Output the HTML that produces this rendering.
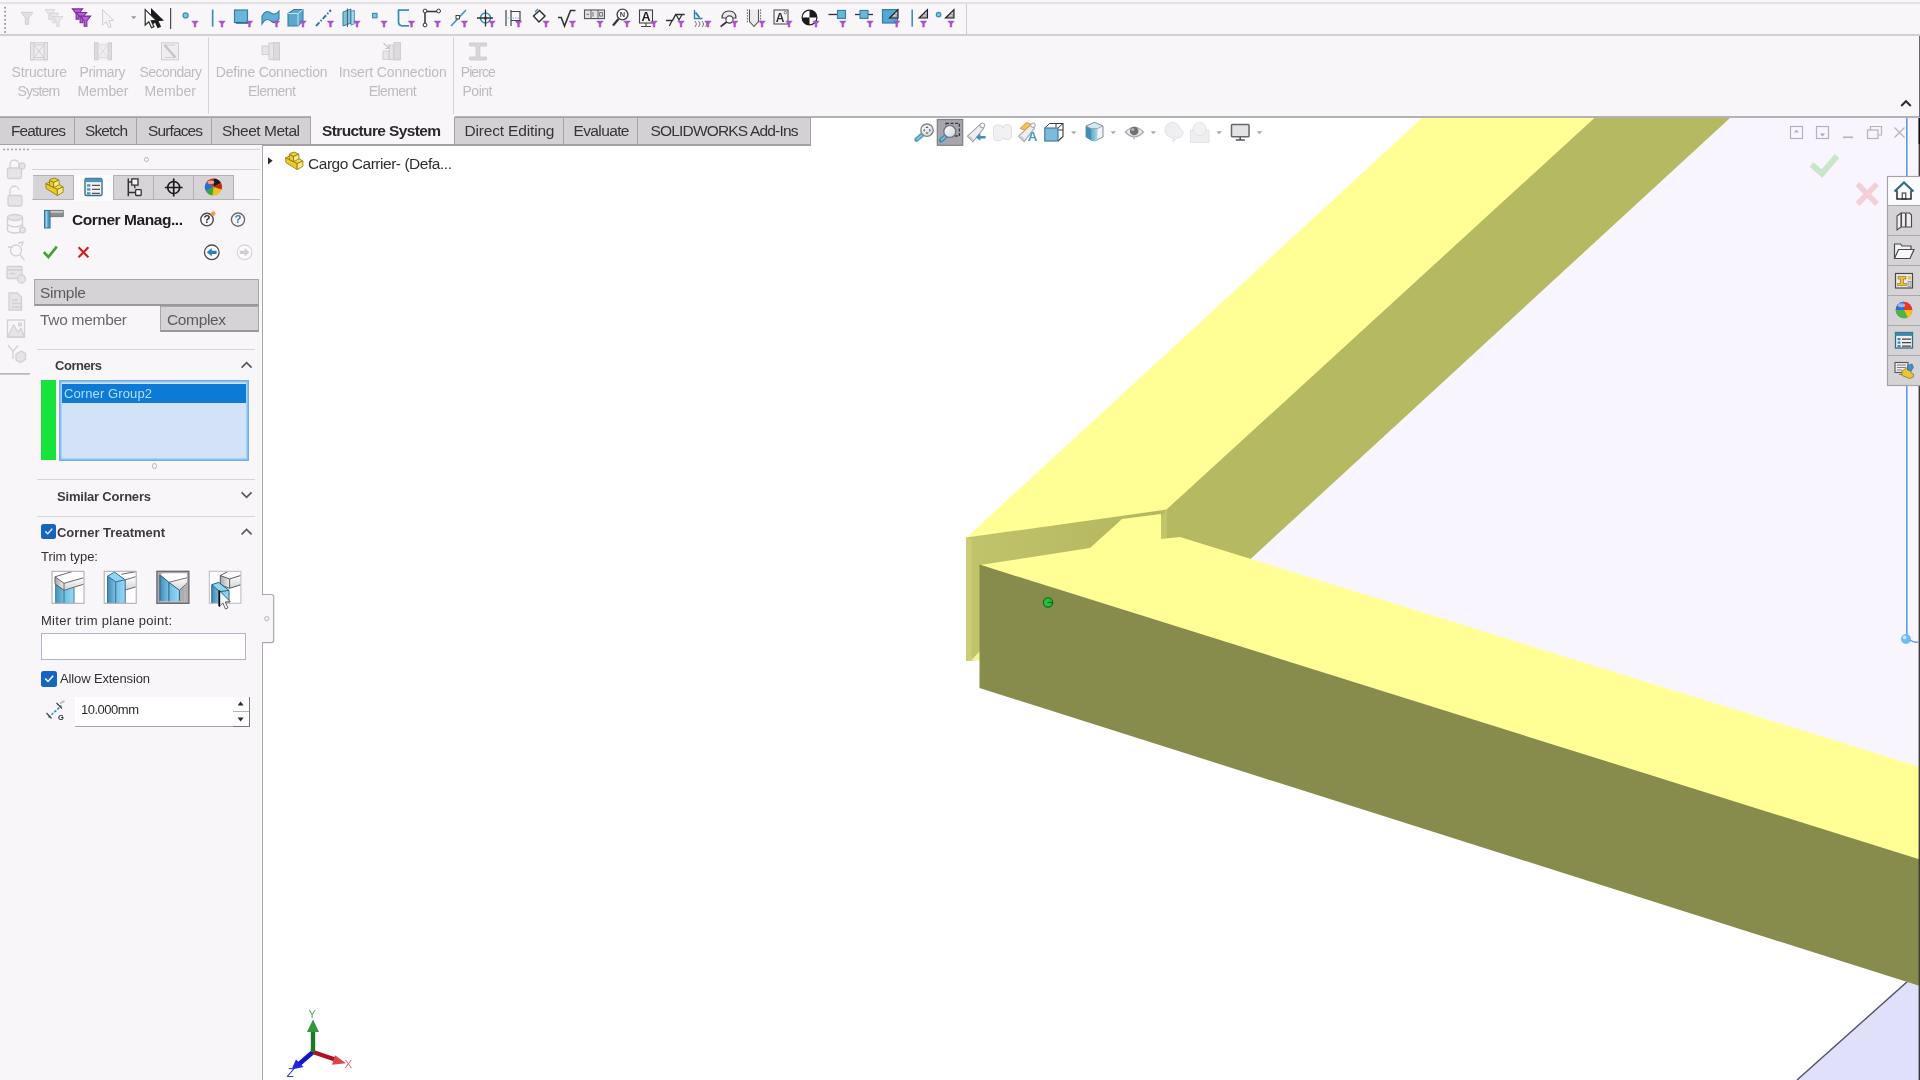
<!DOCTYPE html>
<html lang="en">
<head>
<meta charset="utf-8">
<title>Cargo Carrier - Corner Management</title>
<style>
html,body{margin:0;padding:0;width:1920px;height:1080px;overflow:hidden;background:#ffffff;}
body{font-family:"Liberation Sans",sans-serif;color:#2b2b2b;}
#root{position:relative;width:1920px;height:1080px;overflow:hidden;background:#ffffff;will-change:transform;}
.a{position:absolute;}
.t{position:absolute;white-space:nowrap;line-height:1;}
svg{position:absolute;left:0;top:0;overflow:visible;}
.tab{position:absolute;top:117px;height:28px;box-sizing:border-box;background:#d3d1d4;border:1px solid #a5a3a6;font-size:15.5px;color:#353535;white-space:nowrap;}
.tab span{position:absolute;top:4px;line-height:17px;white-space:nowrap;}
.rib{position:absolute;font-size:14px;color:#bdbbbf;white-space:nowrap;line-height:16px;}
.pmtab{position:absolute;top:175px;height:25px;box-sizing:border-box;background:#d6d4d7;border:1px solid #b3b1b4;}
.sec{position:absolute;left:37px;width:218px;height:1px;background:#d7d5d8;}
.hd{position:absolute;font-size:13px;font-weight:bold;color:#3c3c3c;white-space:nowrap;line-height:16px;}
.lb{position:absolute;font-size:13px;color:#303036;white-space:nowrap;line-height:16px;}
</style>
</head>
<body>
<div id="root">
<!-- ================= GRAPHICS VIEWPORT ================= -->
<svg id="view" width="1920" height="1080" viewBox="0 0 1920 1080">
  <defs><linearGradient id="cutg" gradientUnits="userSpaceOnUse" x1="966" y1="0" x2="1167" y2="0"><stop offset="0" stop-color="#c1c46b"/><stop offset="0.500" stop-color="#b9bc64"/><stop offset="1" stop-color="#b3b75f"/></linearGradient></defs>
  <!-- reference plane (lavender) -->
  <polygon points="1240,560 1730,118 1920,118 1920,790" fill="#f9f5fe"/>
  <polygon points="1797,1080 1920,970 1920,1080" fill="#e0e0fb"/>
  <line x1="1797" y1="1080" x2="1908" y2="981" stroke="#50506a" stroke-width="1.400"/>
  <!-- upper member : top face -->
  <polygon points="966,538 1422,118 1595,118 1167,510" fill="#ffff96"/>
  <!-- upper member : inner side face -->
  <polygon points="1166.500,509.600 1594.400,118 1730,118 1250,559.500 1180,539.500 1166.500,540" fill="#b5b961"/>
  <polygon points="1161,513 1167,509.800 1167,540 1161,541" fill="#c1c46a"/>
  <!-- upper member : trimmed end face -->
  <polygon points="966,537.600 1167,509.600 1161,516 1122,522 1090,551 980,568 980,660 966,661" fill="url(#cutg)"/>
  <polygon points="966,538 971.5,539 971.5,660 966,661" fill="#cbce74"/>
  <polygon points="971.5,660 980,651 980,660" fill="#f3f39a"/>
  <!-- lower member : top face -->
  <polygon points="980,565 1090,548 1122,519 1161,514 1161,539 1180,537 1920,767 1920,860" fill="#ffff96"/>
  <!-- lower member : front face -->
  <polygon points="979.500,564.600 1920,859.600 1920,986 979.500,688" fill="#878b4b"/>
  <!-- pierce point -->
  <circle cx="1048" cy="602.5" r="4.6" fill="#1fc639" stroke="#0f6a1d" stroke-width="1.2"/>
  <path d="M1047.5 602.5h5" stroke="#0f6a1d" stroke-width="1.4"/>
  <!-- right edge rollback bar -->
  <rect x="1906" y="118" width="1.6" height="521" fill="#5b9bea"/>
  <circle cx="1906" cy="639" r="5" fill="#6fbdf2"/>
  <circle cx="1904.6" cy="637.4" r="1.8" fill="#c7e7fb"/>
  <path d="M1910 640 q4 3 8 2" fill="none" stroke="#5b9bea" stroke-width="1.4"/>
  <rect x="1918.600" y="118" width="1.400" height="962" fill="#3d3d3d"/>
  <rect x="1918.600" y="117" width="1.400" height="27" fill="#111"/>
  <!-- triad -->
  <g id="triad">
    <path d="M313 1052 L298 1065" stroke="#1414c8" stroke-width="4.600" stroke-linecap="round"/>
    <path d="M291.500 1069.500 l4.500 -10 l7.500 7.500z" fill="#2424e4"/>
    <path d="M313 1052 L338 1060.5" stroke="#b01020" stroke-width="4.2"/>
    <path d="M346 1063.2 l-11 -8 l-3 9.5z" fill="#e0454f"/>
    <path d="M313 1052 L313 1030" stroke="#1f7a26" stroke-width="4.4"/>
    <path d="M313 1019.5 l6 12.5 h-12z" fill="#2f9838"/>
    <text x="308.500" y="1017.500" font-size="11" fill="#4caf50" font-family="Liberation Sans, sans-serif">Y</text>
    <text x="344.5" y="1067.5" font-size="11.5" fill="#ee6b77" font-family="Liberation Sans, sans-serif">X</text>
    <text x="287" y="1076.5" font-size="12" font-style="italic" fill="#3a3af0" font-family="Liberation Sans, sans-serif">Z</text>
  </g>
</svg>
<!-- ================= TOP CHROME ================= -->
<div class="a" style="left:0;top:0;width:1920px;height:117px;background:#f8f6f9;"></div>
<div class="a" style="left:0;top:2px;width:1920px;height:2px;background:#e4e2e5;"></div>
<div class="a" style="left:0;top:34px;width:1920px;height:2px;background:#d2d0d3;"></div>
<div class="a" style="left:965.5px;top:4px;width:1.5px;height:31px;background:#cfcdd0;"></div>
<div class="a" style="left:0;top:116px;width:1920px;height:2px;background:#b4b2b5;"></div>
<div class="a" style="left:1918.5px;top:36px;width:1.5px;height:81px;background:#6a686b;"></div>
<svg id="filterbar" width="1920" height="36" viewBox="0 0 1920 36">
<defs>
<g id="pf"><path d="M-3.3 -3h6.600l-2.400 2.800v3.300h-1.800v-3.300z" fill="#ad50cf" stroke="#9a44bd" stroke-width="0.4"/></g>
<g id="gf"><path d="M-6 -6h12l-4.4 5.6v6.4h-3.2v-6.4z" /></g>
<g id="rul"><path d="M-4.500 4 l8.500 -8.500 v8.500z" fill="#a4a4a8" stroke="#222" stroke-width="1.100"/><path d="M-0.500 1.800h2.500M1.500 -0.800h1.500" stroke="#eee" stroke-width="0.800"/></g>
</defs>
<rect x="4.2" y="6.8" width="1.8" height="1.8" fill="#9b999c"/>
<rect x="4.2" y="10.8" width="1.8" height="1.8" fill="#9b999c"/>
<rect x="4.2" y="14.9" width="1.8" height="1.8" fill="#9b999c"/>
<rect x="4.2" y="18.9" width="1.8" height="1.8" fill="#9b999c"/>
<rect x="4.2" y="23.0" width="1.8" height="1.8" fill="#9b999c"/>
<rect x="4.2" y="27.1" width="1.8" height="1.8" fill="#9b999c"/>
<rect x="4.2" y="31.1" width="1.8" height="1.8" fill="#9b999c"/>
<use href="#gf" x="27" y="18.3" fill="#e1dfe2" stroke="#cdcbce" stroke-width="0.9"/>
<use href="#gf" transform="translate(50.0 14.6) scale(0.82)" fill="#ebe9ec" stroke="#d3d1d4" stroke-width="1"/>
<use href="#gf" transform="translate(54.0 18.0) scale(0.82)" fill="#ebe9ec" stroke="#d3d1d4" stroke-width="1"/>
<use href="#gf" transform="translate(58.0 21.4) scale(0.82)" fill="#ebe9ec" stroke="#d3d1d4" stroke-width="1"/>
<use href="#gf" transform="translate(77.5 14.0) scale(0.85)" fill="#b660d8" stroke="#7a2a9c" stroke-width="1.3"/>
<use href="#gf" transform="translate(81.5 17.6) scale(0.85)" fill="#b660d8" stroke="#7a2a9c" stroke-width="1.3"/>
<use href="#gf" transform="translate(85.5 21.2) scale(0.85)" fill="#b660d8" stroke="#7a2a9c" stroke-width="1.3"/>
<path d="M102.6 9.6 l0 15.5 l3.6 -3.4 l2.7 6 l2.4 -1.1 l-2.7 -5.9 l5 -0.3z" fill="#f5f3f6" stroke="#d0ced1" stroke-width="1"/>
<path d="M131 16.2h5.4l-2.7 3z" fill="#98969a"/>
<path d="M151.6 9.4 l0 15.5 l3.6 -3.4 l2.7 6 l2.4 -1.1 l-2.7 -5.9 l5 -0.3z" fill="#1a1a1a" stroke="#1a1a1a" stroke-width="1.2"/>
<path d="M145.2 9.6 l0 15.5 l3.6 -3.4 l2.7 6 l2.4 -1.1 l-2.7 -5.9 l5 -0.3z" fill="#fbfbfb" stroke="#2a2a2a" stroke-width="1.2"/>
<rect x="170" y="8" width="1.2" height="21" fill="#4d4b4e"/>
<circle cx="185.6" cy="15.4" r="2.5" fill="#7fc6e3" stroke="#3d8fb5" stroke-width="1.3"/>
<use href="#pf" x="195.0" y="24.0"/>
<rect x="211.8" y="9.6" width="1.7" height="17" fill="#3d8fb5"/>
<use href="#pf" x="222.0" y="24.0"/>
<rect x="234.5" y="10" width="13" height="12.5" fill="#6bb5d6" stroke="#2f7fa6" stroke-width="1.2"/><path d="M235 22.5h13.4v1.3h-12z" fill="#2a5f7c"/>
<use href="#pf" x="249.5" y="24.0"/>
<path d="M262 16 q4 -7 9 -3 q4 3 8 -2 v8 q-4 6 -8 2 q-5 -4 -9 3z" fill="#5fb0d4" stroke="#2f7fa6" stroke-width="1.1"/>
<use href="#pf" x="276.5" y="24.0"/>
<path d="M288 13.5 l6 -4 h9 v11 l-5 5.5 h-10z" fill="#5aa9cc" stroke="#2f7fa6" stroke-width="1.1"/><path d="M288 13.5h10l5 -4M298 13.5v12" fill="none" stroke="#bfe3f2" stroke-width="1"/>
<use href="#pf" x="303.0" y="24.0"/>
<path d="M316 26 L331 10" stroke="#34799b" stroke-width="2" stroke-dasharray="5 1.6 1.6 1.6"/>
<use href="#pf" x="330.5" y="24.0"/>
<path d="M343 12 l8 -3 v14 l-8 3z" fill="#7fc2de" stroke="#2f7fa6" stroke-width="1"/><path d="M347.4 8.5v18.5" stroke="#555" stroke-width="1"/><path d="M351 11.5l3.4 -1.2v13.5l-3.4 1.4z" fill="#a9d9ec" stroke="#2f7fa6" stroke-width="0.8"/>
<use href="#pf" x="357.0" y="24.0"/>
<rect x="372.6" y="13.4" width="4.4" height="4.4" fill="#7fc6e3" stroke="#3d8fb5" stroke-width="1.2"/>
<use href="#pf" x="384.0" y="24.0"/>
<path d="M409 10.2h-10.5v11.6q0 4 4 4h6.5" fill="none" stroke="#3d8fb5" stroke-width="1.8"/><path d="M401 12.5h8v9.5h-5" fill="none" stroke="#c5dff0" stroke-width="0.7" stroke-dasharray="1 1"/>
<use href="#pf" x="411.5" y="24.0"/>
<path d="M425 11.5v13M425 11.5h13" fill="none" stroke="#333" stroke-width="1.5"/><circle cx="425" cy="11" r="1.9" fill="#fff" stroke="#333" stroke-width="1"/><circle cx="438.6" cy="11" r="1.9" fill="#fff" stroke="#333" stroke-width="1"/><circle cx="425" cy="25" r="1.9" fill="#fff" stroke="#333" stroke-width="1"/>
<use href="#pf" x="437.5" y="24.0"/>
<path d="M451 26 L466 10" stroke="#3d8fb5" stroke-width="1.5"/><rect x="456" y="15.5" width="3.4" height="3.4" fill="#fff" stroke="#333" stroke-width="0.9"/>
<use href="#pf" x="464.5" y="24.0"/>
<circle cx="485.5" cy="18" r="5" fill="none" stroke="#3d8fb5" stroke-width="1.6"/><path d="M485.5 9.5v17M477 18h16" stroke="#333" stroke-width="1.3"/><circle cx="485.5" cy="18" r="1.6" fill="#333"/>
<use href="#pf" x="492.0" y="24.0"/>
<path d="M506 10v16M511 10v16" stroke="#444" stroke-width="1.2"/><path d="M511 11.5h9v9h-9" fill="none" stroke="#444" stroke-width="1.2"/><path d="M505 18h15" stroke="#6ab0e0" stroke-width="0.9" stroke-dasharray="1.5 1"/>
<use href="#pf" x="518.5" y="24.0"/>
<path d="M533.5 16 l6 -5.5 l5.5 5.5 l-6 6z" fill="#fff" stroke="#333" stroke-width="1.5"/><path d="M535 12l3-3" stroke="#3d8fb5" stroke-width="1.3"/>
<use href="#pf" x="546.0" y="24.0"/>
<path d="M558 17.5 h3.2 l3.3 8.5 l6 -15.5 h5" fill="none" stroke="#333" stroke-width="1.6"/>
<use href="#pf" x="572.5" y="24.0"/>
<rect x="584.5" y="10" width="20" height="8.6" fill="#e4e2e5" stroke="#555" stroke-width="1.1"/><path d="M591 10v8.6M598 10v8.6" stroke="#555" stroke-width="0.9"/><path d="M586.4 14.3h2.8M593 12v4.6M599.6 12.5h3v3.6h-3z" stroke="#555" stroke-width="0.8" fill="none"/>
<use href="#pf" x="600.0" y="24.0"/>
<circle cx="622.5" cy="14.5" r="5.4" fill="#fff" stroke="#444" stroke-width="1.4"/><path d="M618.5 19l-5.5 6.5" stroke="#333" stroke-width="2.2"/><text x="622.500" y="17.200" font-size="7.500" font-weight="bold" text-anchor="middle" fill="#444" font-family="Liberation Sans, sans-serif">N</text>
<use href="#pf" x="627.0" y="24.0"/>
<rect x="639.5" y="10" width="13" height="13" fill="#f4f2f5" stroke="#444" stroke-width="1.1"/><text x="646" y="21.400" font-size="12.500" font-weight="bold" text-anchor="middle" fill="#222" font-family="Liberation Sans, sans-serif">A</text><path d="M641 26.5h10M646 23v3.5" stroke="#444" stroke-width="1.1"/>
<use href="#pf" x="654.0" y="24.0"/>
<path d="M666 20.5h6.5l3.2 -6h9" fill="none" stroke="#333" stroke-width="1.5"/><path d="M672 20.5l-2.6 5.5M676 14.5l3 5.5l3 -5.5" fill="none" stroke="#333" stroke-width="1.3"/>
<use href="#pf" x="681.0" y="24.0"/>
<path d="M694.5 10v8.5h8" fill="none" stroke="#2f7fa6" stroke-width="1.4"/><path d="M695.5 12.5l4 5" stroke="#2f7fa6" stroke-width="2"/><path d="M695 21q3 3 0 6M698.6 21q3 3 0 6M702.2 21q3 3 0 6M705.6 21q3 3 0 6" fill="none" stroke="#777" stroke-width="1"/>
<use href="#pf" x="708.0" y="24.0"/>
<path d="M722 18q0 -7 7 -7t7 7z" fill="#e9e7ea" stroke="#444" stroke-width="1.2"/><circle cx="729.5" cy="19.5" r="3.6" fill="#fff" stroke="#444" stroke-width="1.1"/><path d="M726.6 22l-6 4.6" stroke="#333" stroke-width="1.8"/>
<use href="#pf" x="734.7" y="24.0"/>
<path d="M749.5 9.5v12l4.5 5l4.5 -5v-12" fill="#ecebed" stroke="#555" stroke-width="1.1"/><path d="M747.4 9.5v13M760.6 9.5v13" stroke="#555" stroke-width="0.9" stroke-dasharray="1.6 1.2"/>
<use href="#pf" x="762.0" y="24.0"/>
<rect x="774" y="10" width="14" height="14" fill="#f4f2f5" stroke="#555" stroke-width="1.1"/><text x="780.200" y="22.200" font-size="12" font-weight="bold" text-anchor="middle" fill="#333" font-family="Liberation Sans, sans-serif">A</text><circle cx="785.4" cy="12.6" r="1.2" fill="none" stroke="#555" stroke-width="0.7"/>
<use href="#pf" x="789.0" y="24.0"/>
<circle cx="809.5" cy="17.5" r="7.4" fill="#fff" stroke="#222" stroke-width="1.2"/><path d="M809.5 17.5v-7.4a7.4 7.4 0 0 1 7.4 7.4zM809.5 17.5v7.4a7.4 7.4 0 0 1 -7.4 -7.4z" fill="#1a1a1a"/>
<use href="#pf" x="816.0" y="24.0"/>
<path d="M828.5 14.5h9" stroke="#333" stroke-width="1.3"/><rect x="837.5" y="10.4" width="8" height="8" fill="#6bb5d6" stroke="#2f7fa6" stroke-width="1.1"/>
<use href="#pf" x="842.8" y="24.0"/>
<path d="M855 14.5h18" stroke="#333" stroke-width="1.3"/><rect x="860" y="10.4" width="8" height="8" fill="#6bb5d6" stroke="#2f7fa6" stroke-width="1.1"/>
<use href="#pf" x="870.0" y="24.0"/>
<rect x="882.5" y="9.6" width="15" height="13.4" fill="#55a8d4" stroke="#2f7fa6" stroke-width="1.2"/><use href="#rul" x="894" y="14"/>
<use href="#pf" x="896.7" y="24.0"/>
<rect x="911.4" y="9.6" width="1.6" height="17" fill="#3d8fb5"/><use href="#rul" x="923.5" y="14"/>
<use href="#pf" x="923.5" y="24.0"/>
<circle cx="938.6" cy="14.6" r="2.3" fill="#7fc6e3" stroke="#3d8fb5" stroke-width="1.2"/><use href="#rul" x="950" y="14"/>
<use href="#pf" x="951.0" y="24.0"/>
</svg>
<!-- ================= COMMAND MANAGER RIBBON ================= -->
<div class="a" style="left:208px;top:37px;width:1.4px;height:77px;background:#d5d3d6;"></div>
<div class="a" style="left:453px;top:37px;width:1.4px;height:77px;background:#d5d3d6;"></div>
<span class="rib" id="r1" style="letter-spacing:-0.164px;left:11.5px;top:64px;">Structure</span>
<span class="rib" id="r2" style="letter-spacing:-0.797px;left:17.5px;top:83px;">System</span>
<span class="rib" id="r3" style="letter-spacing:-0.372px;left:79.5px;top:64px;">Primary</span>
<span class="rib" id="r4" style="letter-spacing:-0.072px;left:77.5px;top:83px;">Member</span>
<span class="rib" id="r5" style="letter-spacing:-0.555px;left:139.5px;top:64px;">Secondary</span>
<span class="rib" id="r6" style="letter-spacing:0.028px;left:144.5px;top:83px;">Member</span>
<span class="rib" id="r7" style="letter-spacing:-0.218px;left:215.8px;top:64px;">Define Connection</span>
<span class="rib" id="r8" style="letter-spacing:-0.593px;left:248px;top:83px;">Element</span>
<span class="rib" id="r9" style="letter-spacing:-0.108px;left:338.7px;top:64px;">Insert Connection</span>
<span class="rib" id="r10" style="letter-spacing:-0.560px;left:368.7px;top:83px;">Element</span>
<span class="rib" id="r11" style="letter-spacing:-0.938px;left:460.8px;top:64px;">Pierce</span>
<span class="rib" id="r12" style="letter-spacing:-0.480px;left:462.5px;top:83px;">Point</span>
<svg id="ribicons" width="520" height="118" viewBox="0 0 520 118">
  <g fill="#e7e5e8" stroke="#cfcdd0" stroke-width="1">
    <!-- structure system -->
    <rect x="30.5" y="42.8" width="17" height="17" fill="#efedf0"/>
    <rect x="30.5" y="42.8" width="3.4" height="17"/><rect x="44.1" y="42.8" width="3.4" height="17"/>
    <path d="M34 45h10M34 57.5h10M34 45l10 12.5M44 45l-10 12.5" fill="none"/>
    <!-- primary member -->
    <rect x="94.5" y="42.8" width="17" height="17" fill="#efedf0" stroke="none"/>
    <rect x="94.5" y="42.8" width="3.4" height="17" fill="#dddbde"/><rect x="108.1" y="42.8" width="3.4" height="17" fill="#dddbde"/>
    <path d="M98 45h10M98 57.5h10M98 45l10 12.5M108 45l-10 12.5" fill="none" stroke="#dedce0"/>
    <!-- secondary member -->
    <rect x="161.5" y="42.8" width="17" height="17" fill="#efedf0"/>
    <path d="M165 45h10M165 57.5h10" fill="none"/>
    <path d="M164.5 45l11 12.5" fill="none" stroke="#c6c4c7" stroke-width="2.4"/>
    <!-- define connection -->
    <rect x="262" y="46" width="7" height="8.5"/>
    <rect x="269" y="43" width="4.5" height="16.5"/>
    <rect x="273.5" y="42.6" width="6" height="17.4" fill="#dcdadd"/>
    <!-- insert connection -->
    <rect x="383" y="51" width="6" height="8.5"/>
    <rect x="389.4" y="45" width="4" height="14.6"/>
    <rect x="394" y="42.6" width="6.4" height="17.4" fill="#dcdadd"/>
    <path d="M383.5 43l5.5 5.5M389 44.5v4h-4" fill="none" stroke="#c6c4c7" stroke-width="1.2"/>
  </g>
  <!-- pierce point -->
  <path d="M469.5 43h17v3h-6.6v11h6.6v3h-17v-3h6.6v-11h-6.6z" fill="#d8d6d9" stroke="#cac8cb" stroke-width="0.8"/>
</svg>
<!-- ================= COMMAND MANAGER TABS ================= -->
<div class="tab" style="left:-1px;width:76px;"><span id="tb1" style="letter-spacing:-0.882px;left:11px;">Features</span></div>
<div class="tab" style="left:74px;width:63px;"><span id="tb2" style="letter-spacing:-0.878px;left:10px;">Sketch</span></div>
<div class="tab" style="left:136px;width:76px;"><span id="tb3" style="letter-spacing:-0.882px;left:11px;">Surfaces</span></div>
<div class="tab" style="left:211px;width:100px;"><span id="tb4" style="letter-spacing:-0.472px;left:10px;">Sheet Metal</span></div>
<div class="tab" style="left:310.5px;width:144px;top:115px;height:30px;background:#f8f6f9;border:none;color:#2a2a2a;font-weight:bold;"><span id="tb5" style="letter-spacing:-0.624px;left:11.5px;top:7px;">Structure System</span></div>
<div class="tab" style="left:454px;width:110px;"><span id="tb6" style="letter-spacing:-0.168px;left:9.5px;">Direct Editing</span></div>
<div class="tab" style="left:563px;width:75px;"><span id="tb7" style="letter-spacing:-0.618px;left:9.5px;">Evaluate</span></div>
<div class="tab" style="left:637px;width:174px;"><span id="tb8" style="letter-spacing:-0.821px;left:12.5px;">SOLIDWORKS Add-Ins</span></div>
<div class="a" style="left:0;top:144px;width:811px;height:1.6px;background:#a3a1a4;"></div>
<!-- ================= LEFT PANEL ================= -->
<div class="a" id="leftbg" style="left:0;top:145px;width:262px;height:935px;background:#f8f6f9;"></div>
<div class="a" style="left:261.900px;top:145px;width:1.400px;height:935px;background:#aaa8ac;"></div>
<!-- splitter handle -->
<svg id="split" width="280" height="660" viewBox="0 0 280 660">
  <path d="M262.8 594.5h8.5q2.4 0 2.4 2.4v43.4q0 2.4 -2.4 2.4h-8.5z" fill="#f8f6f9" stroke="#aaa8ac" stroke-width="1.200"/>
  <rect x="261.8" y="595.2" width="2.2" height="46.8" fill="#f8f6f9"/>
  <circle cx="266.8" cy="618.6" r="2.1" fill="none" stroke="#b5b3b6" stroke-width="1"/>
</svg>
<!-- feature tree flyout header -->
<svg id="flytree" width="480" height="180" viewBox="0 0 480 180">
  <path d="M268 157.2l4.6 3.6l-4.6 3.6z" fill="#2a2a2a"/>
  <g transform="translate(280 148) scale(1.0)" stroke="#8f7408" stroke-width="0.800" stroke-linejoin="round">
    <path d="M5.600 9.800L9.100 8.200L19 10.700L22.900 13L17.200 15.500Z" fill="#f3dc52"/>
    <path d="M5.600 9.800L17.200 15.500V21.600L5.900 14.600Z" fill="#ecca2c"/>
    <path d="M17.200 15.500L22.900 13V18.300L17.200 21.600Z" fill="#f8ea7c"/>
    <path d="M9.300 6.600L10.100 5.300L14.500 4.100L18.800 6.200L13.500 8.500Z" fill="#e8cf44"/>
    <path d="M9.300 6.600L13.500 8.500V13.600L9.300 11.600Z" fill="#eccb2e"/>
    <path d="M13.500 8.500L18.800 6.200L19 11L13.500 13.600Z" fill="#f9ec84"/>
  </g>
</svg>
<span class="t" id="cc" style="letter-spacing:-0.463px;left:308px;top:156px;font-size:15.5px;color:#303030;">Cargo Carrier- (Defa...</span>

<!-- vertical icon strip -->
<svg id="strip" width="34" height="380" viewBox="0 0 34 380">
  <g fill="#a9a7aa"><rect x="3" y="148.6" width="2" height="1.6"/><rect x="7" y="148.6" width="2" height="1.6"/><rect x="11" y="148.6" width="2" height="1.6"/><rect x="15" y="148.6" width="2" height="1.6"/><rect x="19" y="148.6" width="2" height="1.6"/><rect x="23" y="148.6" width="2" height="1.6"/><rect x="27" y="148.6" width="2" height="1.6"/></g>
  <g fill="#e6e4e7" stroke="#d2d0d3" stroke-width="1.300">
    <path d="M10 168v-3.5a4.5 4.5 0 0 1 9 0v3.5" fill="none"/><rect x="7.5" y="168" width="14" height="10.5" rx="1.5"/><circle cx="22" cy="166" r="3"/>
    <path d="M10 195v-3.5a4.5 4.5 0 0 1 9 -1.5" fill="none"/><rect x="8" y="195.5" width="14" height="10.5" rx="1.5"/>
    <ellipse cx="15" cy="217.5" rx="7.5" ry="3"/><path d="M7.5 217.5v12.5a7.5 3 0 0 0 15 0v-12.5M7.5 223.8a7.5 3 0 0 0 15 0" fill="none"/><circle cx="22.5" cy="230" r="2.8"/>
    <circle cx="16" cy="250.5" r="5.5" fill="none"/><path d="M20 255l4.5 5M8 247h5M18 243l5 -1l-1.5 4" fill="none"/>
    <rect x="7" y="266.5" width="15" height="12" rx="1"/><path d="M7 270h15M10 273.5h5" fill="none"/><circle cx="21.5" cy="279" r="4"/>
    <path d="M9 293h8.5l4 4v13h-12.5z"/><path d="M12 300h6M12 303.5h10M12 307h10" fill="none"/>
    <path d="M7.5 337l6 -12l4.5 7l3 -3.5l3.5 8.5z"/><rect x="7.500" y="320" width="17" height="17" fill="none"/><circle cx="20" cy="324.5" r="1.6"/>
    <path d="M8 345l5 6.5v7.5M18 345.5l-5 6" fill="none"/><path d="M16 354l5 -3l4.5 2.5v6l-5 3l-4.500 -2.500z"/>
  </g>
  <rect x="0" y="373.2" width="30" height="1.4" fill="#a9a7aa"/>
</svg>

<!-- property manager top lines -->
<div class="a" style="left:32px;top:149px;width:228px;height:1.3px;background:#d5d3d6;"></div>
<div class="a" style="left:32px;top:169px;width:228px;height:1.3px;background:#d5d3d6;"></div>
<div class="a" style="left:143.6px;top:156.6px;width:3.6px;height:3.6px;border:1px solid #b5b3b6;border-radius:50%;"></div>
<!-- PM tabs -->
<div class="a" style="left:32px;top:199px;width:228px;height:1.400px;background:#c4c2c5;"></div>
<div class="a" style="left:74px;top:175px;width:39.500px;height:25.600px;background:#fcfbfd;"></div>
<div class="pmtab" style="left:33px;width:41px;border-left:none;"></div>
<div class="pmtab" style="left:113px;width:41px;"></div>
<div class="pmtab" style="left:153px;width:41px;"></div>
<div class="pmtab" style="left:193px;width:41px;"></div>
<svg id="pmtabicons" width="262" height="270" viewBox="0 0 262 270">
  <!-- feature manager part icon -->
  <g transform="translate(40.2 173.9) scale(1.0)" stroke="#8f7408" stroke-width="0.800" stroke-linejoin="round">
    <path d="M5.600 9.800L9.100 8.200L19 10.700L22.900 13L17.200 15.500Z" fill="#f3dc52"/>
    <path d="M5.600 9.800L17.200 15.500V21.600L5.900 14.600Z" fill="#ecca2c"/>
    <path d="M17.200 15.500L22.900 13V18.300L17.200 21.600Z" fill="#f8ea7c"/>
    <path d="M9.300 6.600L10.100 5.300L14.500 4.100L18.800 6.200L13.500 8.500Z" fill="#e8cf44"/>
    <path d="M9.300 6.600L13.500 8.500V13.600L9.300 11.600Z" fill="#eccb2e"/>
    <path d="M13.500 8.500L18.800 6.200L19 11L13.500 13.600Z" fill="#f9ec84"/>
  </g>
  <!-- property manager icon (active) -->
  <rect x="85" y="178.500" width="17" height="17" rx="1.5" fill="#f3f1f4" stroke="#3c6f8e" stroke-width="1.400"/>
  <rect x="85" y="178.500" width="17" height="3.600" fill="#4e94b8"/>
  <g fill="#4e94b8"><rect x="87" y="184.200" width="3.400" height="2.400"/><rect x="87" y="188.200" width="3.400" height="2.400"/><rect x="87" y="192.200" width="3.400" height="2.400"/></g>
  <path d="M92 185.400h8M92 189.400h8M92 193.400h8" stroke="#555" stroke-width="1.200"/>
  <!-- configuration manager -->
  <g fill="#f4f2f5" stroke="#333" stroke-width="1.300">
    <path d="M128.300 178.400v17.800M128.300 182h4M128.300 192.600h7.600" fill="none" stroke-width="1.500"/>
    <rect x="131.800" y="178.900" width="6.200" height="6.200"/>
    <path d="M134.800 185.200v3" fill="none"/>
    <rect x="135.600" y="189.600" width="5.600" height="5.900" rx="0.800"/>
  </g>
  <!-- dimxpert crosshair -->
  <circle cx="173.700" cy="187.500" r="6" fill="none" stroke="#1c1c1c" stroke-width="1.700"/>
  <path d="M173.700 178.600v17.800M164.800 187.500h17.800" stroke="#1c1c1c" stroke-width="1.700"/>
  <!-- display manager sphere -->
  <circle cx="213.500" cy="187" r="8.600" fill="#f0c020"/>
  <path d="M213.500 187L206.500 182a8.600 8.600 0 0 1 7 -3.600z" fill="#d8262c"/>
  <path d="M213.500 187v-8.600a8.600 8.600 0 0 1 7.600 4.600z" fill="#1a1a1a"/>
  <path d="M213.500 187l7.600 -4a8.600 8.600 0 0 1 0.600 6.500z" fill="#c22"/>
  <path d="M213.500 187L206.500 182a8.600 8.600 0 0 0 -0.500 9.300z" fill="#2a6fd0"/>
  <path d="M213.500 187l-7.500 4.300a8.600 8.600 0 0 0 6.500 4.300z" fill="#3ba53b"/>
  <ellipse cx="211" cy="182.300" rx="3.400" ry="1.800" fill="#ffffff" opacity="0.550"/>
  <!-- corner management feature icon -->
  <rect x="44.500" y="210.400" width="5.600" height="17.600" fill="#4a9bc4" stroke="#2d6b8c" stroke-width="0.900"/>
  <rect x="45.600" y="211" width="1.800" height="16.400" fill="#9bd0e8"/>
  <path d="M50.100 210.400h13.200v6.200h-13.200z" fill="#8e8e90" stroke="#6a6a6c" stroke-width="0.800"/>
  <path d="M50.500 211h12.400v1.800h-12.400z" fill="#c9c9cb"/>
  <!-- help icons -->
  <circle cx="207" cy="219.600" r="6.300" fill="#f7f5f8" stroke="#4a4a4a" stroke-width="1.400"/>
  <circle cx="213.200" cy="213.600" r="2.300" fill="#f0a050"/>
  <circle cx="238" cy="219.600" r="6.600" fill="#f7f5f8" stroke="#6a6a72" stroke-width="1.400"/>
  <!-- ok / cancel -->
  <path d="M43.800 252.200l4.600 4.800l8.400 -10.400" fill="none" stroke="#3aa528" stroke-width="2.600"/>
  <path d="M78.600 247.300l9.800 10M88.400 247.300l-9.800 10" stroke="#d0201c" stroke-width="2.200"/>
  <!-- back / forward -->
  <circle cx="211.800" cy="252.300" r="7.300" fill="#fbfbfc" stroke="#4a4a4e" stroke-width="1.300"/>
  <path d="M206.800 252.300l5 -4.200v2.600h4.800v3.200h-4.800v2.600z" fill="#2e7fb0"/>
  <circle cx="244.600" cy="252.300" r="7.300" fill="#fbfbfc" stroke="#d8d6da" stroke-width="1.300"/>
  <path d="M249.600 252.300l-5 -4.200v2.600h-4.800v3.200h4.800v2.600z" fill="#cfcdd1"/>
</svg>
<span class="t" id="q1" style="left:203.600px;top:213.500px;font-size:11.500px;font-weight:bold;color:#333;">?</span>
<span class="t" id="q2" style="left:234.600px;top:213.500px;font-size:11.500px;font-weight:bold;color:#3a78b0;">?</span>
<span class="t" id="ttl" style="letter-spacing:-0.439px;left:72px;top:211.500px;font-size:15.500px;font-weight:bold;color:#1e1e22;">Corner Manag...</span>
<!-- Simple / Two member / Complex -->
<div class="a" style="left:34px;top:279px;width:225px;height:26.5px;box-sizing:border-box;background:#d5d3d6;border:1px solid #a8a6a9;border-bottom:2px solid #9a989b;"></div>
<span class="t" id="s1" style="letter-spacing:-0.278px;left:40px;top:285px;font-size:15.5px;color:#5c5a5e;">Simple</span>
<div class="a" style="left:160px;top:306px;width:99px;height:26px;box-sizing:border-box;background:#d5d3d6;border:1px solid #a8a6a9;border-bottom:2px solid #9a989b;"></div>
<span class="t" id="s2" style="letter-spacing:-0.288px;left:40px;top:312px;font-size:15.5px;color:#6a686c;">Two member</span>
<span class="t" id="s3" style="letter-spacing:-0.362px;left:167px;top:312px;font-size:15.5px;color:#5c5a5e;">Complex</span>

<!-- Corners -->
<div class="sec" style="top:348.5px;"></div>
<span class="hd" id="h1" style="letter-spacing:-0.477px;left:55px;top:358px;">Corners</span>
<div class="a" style="left:41.200px;top:380.300px;width:14.600px;height:80px;background:#16e43d;"></div>
<div class="a" style="left:58.800px;top:380.200px;width:190.400px;height:81.200px;box-sizing:border-box;background:#d3e2f7;border:1px solid #78aadc;box-shadow:inset 0 0 0 1.500px #80c0fd;"></div>
<div class="a" style="left:61.800px;top:384px;width:184.400px;height:18.800px;background:#0d7bd5;"></div>
<span class="t" id="cg" style="letter-spacing:0.107px;left:64px;top:386.5px;font-size:13px;color:#b4dcff;">Corner Group2</span>
<div class="a" style="left:151.6px;top:463px;width:3.6px;height:3.6px;border:1px solid #b5b3b6;border-radius:50%;"></div>

<!-- Similar Corners -->
<div class="sec" style="top:479px;"></div>
<span class="hd" id="h2" style="letter-spacing:-0.202px;left:57px;top:489px;">Similar Corners</span>

<!-- Corner Treatment -->
<div class="sec" style="top:516px;"></div>
<div class="a" style="left:41px;top:523.5px;width:15px;height:15px;border-radius:2.5px;background:#1565c0;"></div>
<span class="hd" id="h3" style="letter-spacing:-0.025px;left:57px;top:525px;">Corner Treatment</span>
<span class="lb" id="l1" style="letter-spacing:-0.035px;left:41px;top:549px;">Trim type:</span>
<span class="lb" id="l2" style="letter-spacing:0.273px;left:41px;top:613.400px;">Miter trim plane point:</span>
<div class="a" style="left:41px;top:632.5px;width:205px;height:27.500px;box-sizing:border-box;background:#ffffff;border:1.600px solid #b6b2c6;"></div>
<div class="a" style="left:41px;top:670.5px;width:16px;height:16px;border-radius:2.500px;background:#1565c0;"></div>
<span class="lb" id="l3" style="letter-spacing:-0.127px;left:60px;top:671px;">Allow Extension</span>
<div class="a" style="left:75px;top:697px;width:158px;height:29.500px;box-sizing:border-box;background:#ffffff;border-bottom:1.500px solid #a8a6a9;"></div>
<div class="a" style="left:233px;top:697px;width:16.500px;height:29.500px;box-sizing:border-box;background:#fdfdfd;border-right:1.500px solid #7a787b;border-bottom:1.500px solid #7a787b;"></div>
<div class="a" style="left:233px;top:711px;width:15.500px;height:1.200px;background:#b5b3b6;"></div>
<span class="t" id="mm" style="letter-spacing:-0.489px;left:81px;top:703px;font-size:13px;color:#2c2c2c;">10.000mm</span>

<svg id="pmicons" width="262" height="740" viewBox="0 0 262 740">
  <defs>
    <linearGradient id="tbD" x1="0" y1="0" x2="1" y2="0"><stop offset="0" stop-color="#3f8db8"/><stop offset="1" stop-color="#7ebfdf"/></linearGradient>
    <linearGradient id="tbL" x1="0" y1="0" x2="1" y2="0"><stop offset="0" stop-color="#6dbde3"/><stop offset="1" stop-color="#9ad9f4"/></linearGradient>
    <linearGradient id="tgE" x1="0" y1="0" x2="1" y2="0"><stop offset="0" stop-color="#a9a9ad"/><stop offset="1" stop-color="#efeff1"/></linearGradient>
    <linearGradient id="tgS" x1="0" y1="0" x2="0" y2="1"><stop offset="0" stop-color="#ffffff"/><stop offset="1" stop-color="#d2d2d6"/></linearGradient>
  </defs>
  <!-- chevrons -->
  <path d="M241.600 367.600l5 -5l5 5" fill="none" stroke="#5a585c" stroke-width="1.700"/>
  <path d="M241.600 492.400l5 5l5 -5" fill="none" stroke="#5a585c" stroke-width="1.700"/>
  <path d="M241.600 534.400l5 -5l5 5" fill="none" stroke="#5a585c" stroke-width="1.700"/>
  <!-- checkbox ticks -->
  <path d="M45.300 531.200l2.400 2.500l4.600 -5" fill="none" stroke="#e8f1fb" stroke-width="1.300"/>
  <path d="M45.200 678.600l2.800 2.900l5.200 -5.800" fill="none" stroke="#ffffff" stroke-width="1.500"/>
  <!-- trim type 1 : end trim -->
  <g transform="translate(52 571.3)">
    <rect x="0" y="0" width="32" height="32" fill="#ffffff"/>
    <path d="M3 12.500l9 6.500v13h-9z" fill="url(#tbD)"/>
    <path d="M12 19l10 -3v16h-10z" fill="url(#tbL)"/>
    <path d="M3 12.500l9 6.500v13M22 16v16" fill="none" stroke="#2d6f94" stroke-width="0.900"/>
    <path d="M3 5.500l17 -5.200h11.500v6.200l-19.500 5.500z" fill="#ffffff"/>
    <path d="M3 5.500l9 6.500v7l-9 -6.500z" fill="url(#tgE)"/>
    <path d="M12 12l19.500 -5.500v6.500l-19.500 6z" fill="url(#tgS)"/>
    <path d="M3 5.500l17 -5.200M3 5.500l9 6.500l19.500 -5.500M3 5.500v7l9 6.500l19.500 -6M12 12v7" fill="none" stroke="#58585c" stroke-width="0.900"/>
    <rect x="0" y="0" width="32" height="32" fill="none" stroke="#a9a7aa" stroke-width="1"/>
  </g>
  <!-- trim type 2 : end butt -->
  <g transform="translate(104.200 571.3)">
    <rect x="0" y="0" width="32" height="32" fill="#ffffff"/>
    <path d="M17 3l14.500 -2.600v5l-10.500 3.200z" fill="#ffffff"/>
    <path d="M21 8.600l10.500 -3.200v10l-10.500 3.200z" fill="url(#tgS)"/>
    <path d="M17 3l14.500 -2.600M21 8.600l10.500 -3.200M21 18.800l10.500 -3.200" fill="none" stroke="#58585c" stroke-width="0.900"/>
    <path d="M3.400 4.800l7 -4l10.600 7.700l-9.500 2z" fill="#8fd6f3"/>
    <path d="M3.400 4.800l8.100 5.700v21.500h-8.100z" fill="url(#tbD)"/>
    <path d="M11.500 10.500l9.500 -2v23.500h-9.500z" fill="url(#tbL)"/>
    <path d="M3.400 32v-27.200l7 -4l10.600 7.700v23.500M3.400 4.800l8.100 5.700l9.500 -2M11.500 10.500v21.500" fill="none" stroke="#2d6f94" stroke-width="1"/>
    <rect x="0" y="0" width="32" height="32" fill="none" stroke="#a9a7aa" stroke-width="1"/>
  </g>
  <!-- trim type 3 : end miter (selected) -->
  <g transform="translate(156.900 571.3)">
    <rect x="0" y="0" width="32" height="32" fill="#adabb0"/>
    <path d="M3 3.500l3 -1.500h24v4.500l-18 4.500z" fill="#ffffff"/>
    <path d="M12 11l18 -4.500v5.500l-7.500 7z" fill="url(#tgS)"/>
    <path d="M3 3.500l9 7.500v19h-9z" fill="url(#tbD)"/>
    <path d="M12 11l10.500 8v11h-10.500z" fill="url(#tbL)"/>
    <path d="M3 30v-26.500l9 7.500l10.500 8v11M12 11v19" fill="none" stroke="#245f82" stroke-width="1"/>
    <path d="M12 11l18 -4.500M22.500 19l7.500 -7" fill="none" stroke="#58585c" stroke-width="0.800"/>
    <path d="M28.200 8v22M3 30h27" fill="none" stroke="#dcdadd" stroke-width="0.800" stroke-dasharray="1.200 1.200"/>
    <rect x="0" y="0" width="32" height="32" fill="none" stroke="#68666a" stroke-width="1.300"/>
  </g>
  <!-- trim type 4 : end cut -->
  <g transform="translate(209.300 571.3)">
    <rect x="0" y="0" width="31.600" height="32" fill="#ffffff"/>
    <path d="M11 4.200l7.500 -3.900h12.800v3.900l-11 3.500z" fill="#ffffff"/>
    <path d="M11 4.200l9.300 3.500v9.300l-9.300 -3.500z" fill="url(#tgE)"/>
    <path d="M20.300 7.700l11 -3.500v9.300l-11 3.500z" fill="url(#tgS)"/>
    <path d="M18.500 0.300l-7.500 3.900v9.300l9.300 3.500l11 -3.500M11 4.200l9.300 3.500l11 -3.500M20.300 7.700v9.300" fill="none" stroke="#48484c" stroke-width="0.900"/>
    <path d="M2.500 13.400l6.900 -2.300l10.300 8l-9.200 1.200z" fill="#8fd6f3"/>
    <path d="M2.500 13.400l8 6.900v11.700h-8z" fill="url(#tbD)"/>
    <path d="M10.500 20.300l9.200 -1.200v12.900h-9.200z" fill="url(#tbL)"/>
    <path d="M2.500 32v-18.600l6.900 -2.300l10.300 8v12.900M2.500 13.400l8 6.900l9.200 -1.200M10.500 20.300v11.700" fill="none" stroke="#245f82" stroke-width="1"/>
    <rect x="0" y="0" width="31.600" height="32" fill="none" stroke="#bcbabd" stroke-width="1"/>
  </g>
  <!-- mouse cursor -->
  <path d="M219.300 590.600v15.800l3.600 -3.400l2.600 6l2.400 -1.100l-2.600 -5.900l5 -0.300z" fill="#fdfdfd" fill-opacity="0.880" stroke="#3a3a40" stroke-width="0.800"/>
  <path d="M219.300 590.600v15.800" stroke="#0a0a0e" stroke-width="1.700"/>
  <!-- extension distance icon -->
  <g>
    <path d="M48.500 717.500l13 -12" stroke="#3a8fb7" stroke-width="1.600" stroke-dasharray="2.600 1.400"/>
    <path d="M46.500 713l5 5.500M56.500 703l5.500 5.500" stroke="#444" stroke-width="1.200"/>
    <path d="M60 703.500l4.500 -2.500" stroke="#bdbbbe" stroke-width="2"/>
  </g>
  <!-- spin arrows -->
  <path d="M237.600 705.600h6l-3 -4z" fill="#2a2a2a"/>
  <path d="M237.600 717.600h6l-3 4z" fill="#2a2a2a"/>
</svg>
<span class="t" id="gg" style="left:58px;top:713.500px;font-size:7.500px;font-weight:bold;color:#2a2a2a;">G</span>
<!-- ================= HEADS-UP VIEW TOOLBAR ================= -->
<svg id="hud" width="1920" height="160" viewBox="0 0 1920 160">
  <defs>
    <linearGradient id="lens" x1="0" y1="0" x2="1" y2="1"><stop offset="0" stop-color="#ffffff"/><stop offset="1" stop-color="#cfd6dc"/></linearGradient>
    <linearGradient id="cubeB" x1="0" y1="0" x2="1" y2="0"><stop offset="0" stop-color="#5fa8cc"/><stop offset="1" stop-color="#a9d6ea"/></linearGradient>
  </defs>
  <!-- zoom to fit -->
  <path d="M922 135l-5.400 4.600" stroke="#4f9dbd" stroke-width="4.600" stroke-linecap="round"/>
  <path d="M921.600 135.400l-4.400 3.800" stroke="#8fc6dc" stroke-width="1.600" stroke-linecap="round"/>
  <circle cx="927" cy="130.200" r="6.200" fill="url(#lens)" stroke="#85858c" stroke-width="1.400"/>
  <path d="M927 126.200l1.500 1.700h-3zM927 134.200l1.500 -1.700h-3zM923 130.200l1.700 -1.500v3zM931 130.200l-1.700 -1.500v3z" fill="#55555a"/>
  <!-- zoom to area (active) -->
  <rect x="937.300" y="119.500" width="25.400" height="25.800" fill="#a7a5ad" stroke="#807e86" stroke-width="1.200"/>
  <rect x="946" y="123.400" width="13.400" height="12.600" fill="none" stroke="#38383c" stroke-width="1.300" stroke-dasharray="3 1.600"/>
  <path d="M945.400 136.400l-4.400 3.800" stroke="#3a8fb4" stroke-width="4.600" stroke-linecap="round"/>
  <path d="M945 136.800l-3.600 3" stroke="#86c2da" stroke-width="1.500" stroke-linecap="round"/>
  <circle cx="949.800" cy="131.400" r="6" fill="url(#lens)" stroke="#74747a" stroke-width="1.400"/>
  <!-- previous view -->
  <path d="M967.400 136.200l5.600 5.600l10.800 -13.600l-3.600 -3.800z" fill="#eceef1" stroke="#a2a5ab" stroke-width="1.100" stroke-linejoin="round"/>
  <path d="M969.600 136.400l3.400 3.400" stroke="#c9ccd2" stroke-width="1.600"/>
  <circle cx="982.400" cy="125.400" r="2.400" fill="#f6f6f8" stroke="#9a9aa0" stroke-width="1"/>
  <path d="M975.800 137.200l4.600 -3.600v2.300h5.200v2.600h-5.200v2.300z" fill="#3f8fb5"/>
  <!-- section view (disabled) -->
  <path d="M993.500 128.500q0 -3.500 5 -3.500q4.500 0 4.500 3q0 -3.500 4.500 -3.500q4 0 4 3.500v9q0 2.500 -4.500 2.500q-4 0 -4 -2q0 3 -5 3q-4.500 0 -4.500 -3z" fill="#f1f0f2" stroke="#deddE0" stroke-width="1"/>
  <!-- dynamic annotation views -->
  <path d="M1018.600 136.200l5.400 5.400l10.600 -13.400l-3.600 -3.800z" fill="#eceef1" stroke="#a2a5ab" stroke-width="1.100" stroke-linejoin="round"/>
  <path d="M1020.800 136.400l3.200 3.200" stroke="#c9ccd2" stroke-width="1.600"/>
  <path d="M1020 128.400l6.400 -5.800l5 1.600l-6.400 5.800z" fill="#f5c451" stroke="#e08f3c" stroke-width="0.900"/>
  <circle cx="1033" cy="125.200" r="2.300" fill="#f6f6f8" stroke="#9a9aa0" stroke-width="0.900"/>
  <text x="1032.600" y="141.200" font-size="13.500" font-weight="bold" text-anchor="middle" fill="#4f9ab8" font-family="Liberation Sans, sans-serif">A</text>
  <!-- view orientation -->
  <path d="M1049.500 123.500h13.500v13l-5 4.500" fill="none" stroke="#3a3a3e" stroke-width="1.100"/>
  <path d="M1044.800 128l4.700 -4.500M1058 128l5 -4.500M1056 123.500v4M1063 130h-5" fill="none" stroke="#3a3a3e" stroke-width="1"/>
  <rect x="1044.800" y="128" width="13.200" height="13" fill="#7dbbd9" stroke="#3d7fa3" stroke-width="1.200"/>
  <path d="M1071 131.200h5.400l-2.700 3z" fill="#aaa8ad"/>
  <!-- display style -->
  <path d="M1086 126l8.500 -3.600l8.500 3.600v11l-8.500 4l-8.500 -4z" fill="#f4f4f6" stroke="#8a8a90" stroke-width="1"/>
  <path d="M1086 126l5 2.500v12l-5 -3.500z" fill="#3f8fb8"/>
  <path d="M1091 128.500h6.500v12.500h-6.500z" fill="url(#cubeB)"/>
  <path d="M1086 126l8.500 -3.600l8.500 3.600l-5.500 2.500h-6.500z" fill="#cfe8f3" stroke="#8a8a90" stroke-width="0.700"/>
  <path d="M1110.500 131.200h5.400l-2.700 3z" fill="#aaa8ad"/>
  <!-- hide / show items -->
  <path d="M1125.400 132q9 -9.500 18 0q-9 9.500 -18 0z" fill="#ececee" stroke="#a5a5aa" stroke-width="1.200"/>
  <circle cx="1134.200" cy="131" r="4.300" fill="#6f6f74"/>
  <circle cx="1132.800" cy="129.400" r="1.500" fill="#b5b5ba"/>
  <path d="M1134.200 135v4.500" stroke="#bdbdc2" stroke-width="1.600"/>
  <path d="M1150.600 131.200h5.400l-2.700 3z" fill="#aaa8ad"/>
  <!-- edit appearance (disabled) -->
  <circle cx="1172.500" cy="130" r="7.600" fill="#efeef0" stroke="#e3e2e5" stroke-width="1"/>
  <path d="M1178 128q6 1 5 6q-1 4 -6 4l-4 4v-5" fill="#f0eff1" stroke="#e3e2e5" stroke-width="1"/>
  <!-- apply scene (disabled) -->
  <path d="M1190.500 130h18.500v12.500h-18.500z" fill="#eeedef" stroke="#e3e2e5" stroke-width="1"/>
  <circle cx="1199.600" cy="129" r="6.600" fill="#f1f0f2" stroke="#e3e2e5" stroke-width="1"/>
  <path d="M1216.500 131.200h5.400l-2.700 3z" fill="#aaa8ad"/>
  <!-- view settings -->
  <rect x="1231.500" y="124.500" width="17.500" height="12.200" rx="0.800" fill="#e3e3e6" stroke="#66666b" stroke-width="1.500"/>
  <path d="M1240.200 137v2.600M1235.800 140h9" stroke="#55555a" stroke-width="1.600"/>
  <path d="M1256.700 131.200h5.400l-2.700 3z" fill="#aaa8ad"/>

  <!-- ribbon collapse chevron -->
  <path d="M1901.200 106l4.800 -4.800l4.800 4.800" fill="none" stroke="#2e2e30" stroke-width="2"/>
  <!-- document window controls -->
  <g fill="none" stroke="#b4b0c6" stroke-width="1.200">
    <rect x="1790.500" y="126.500" width="12" height="12"/>
    <rect x="1816.500" y="126.500" width="12" height="12"/>
    <path d="M1843 137.300h10" stroke-width="1.600"/>
    <path d="M1870.500 130v-3.500h11v8.500h-3.500"/><rect x="1867.500" y="130" width="10.500" height="8.500"/>
    <path d="M1894.500 127.500l10 10M1904.500 127.500l-10 10" stroke="#b7b4c4" stroke-width="1.300"/>
  </g>
  <path d="M1794 132.400h5l-2.500 -2.800z" fill="#b4b0c6"/>
  <path d="M1820 133.600h5l-2.500 2.800z" fill="#a9a5ba"/>
</svg>
<!-- confirmation corner -->
<svg id="confirm" width="1920" height="400" viewBox="0 0 1920 400">
  <path d="M1811.500 164.500l10.500 9l15 -17.500" fill="none" stroke="#c8e7ca" stroke-width="6"/>
  <path d="M1857.500 184l19.500 20M1877 184l-19.500 20" stroke="#f3cfd8" stroke-width="5.500"/>
  <!-- task pane tabs -->
  <rect x="1887.500" y="176.500" width="34" height="209" fill="#d5d3d6" stroke="#a5a3a6" stroke-width="1.200"/>
  <rect x="1888.100" y="177.100" width="33" height="28.400" fill="#fbfafc"/>
  <path d="M1887.500 205.500h33M1887.500 235.500h33M1887.500 265.500h33M1887.500 295.500h33M1887.500 325.500h33M1887.500 355.500h33" stroke="#a9a7aa" stroke-width="1.100"/>
  <!-- home -->
  <path d="M1894.500 191.500l9.500 -9l9.500 9" fill="none" stroke="#2f6c86" stroke-width="2.200"/>
  <path d="M1897 190.500v8.500h14v-8.500" fill="none" stroke="#2a2a2c" stroke-width="1.500"/>
  <rect x="1902.200" y="193" width="3.600" height="6" fill="none" stroke="#2a2a2c" stroke-width="1"/>
  <!-- design library -->
  <path d="M1897 216l4 -3v14l-4 3zM1901.500 213h4v14h-4zM1906 213h3.500l2 2v12h-5.500z" fill="#eeedef" stroke="#4a4a4e" stroke-width="1.100"/>
  <!-- file explorer -->
  <path d="M1894.500 258.500v-14.500h6l1.500 2h9v3.500" fill="#f3f2f4" stroke="#4a4a4e" stroke-width="1.200"/>
  <path d="M1894.500 258.500l4 -9h15.500l-4 9z" fill="#f8f7f9" stroke="#4a4a4e" stroke-width="1.200"/>
  <!-- view palette -->
  <rect x="1895.500" y="273.500" width="17" height="14.500" fill="#e9e7ea" stroke="#4a4a4e" stroke-width="1.200"/>
  <path d="M1898 276.500h8v2.500h-2.500v4.500h3v2h-9v-2h3v-4.500h-2.500z" fill="#e8c53a" stroke="#8a6a00" stroke-width="0.600"/>
  <rect x="1908" y="276" width="3" height="3.500" fill="#e8c53a"/><rect x="1908" y="281.500" width="3" height="5" fill="#cfcdd0" stroke="#666" stroke-width="0.500"/>
  <!-- appearances -->
  <circle cx="1904" cy="310" r="8.300" fill="#e33a2f"/>
  <path d="M1904 310v-8.300a8.300 8.300 0 0 0 -8.300 8.300z" fill="#2e6fd6"/>
  <path d="M1904 310h-8.300a8.300 8.300 0 0 0 12 7.400z" fill="#4cb648"/>
  <path d="M1904 310l3.700 7.400a8.300 8.300 0 0 0 4.600 -7.400z" fill="#f2c21e"/>
  <ellipse cx="1901.500" cy="305.300" rx="3.600" ry="2" fill="#fff" opacity="0.500"/>
  <!-- custom properties -->
  <rect x="1895.500" y="332.500" width="17" height="15.500" fill="#f1eff2" stroke="#2f6c86" stroke-width="1.300"/>
  <rect x="1895.500" y="332.500" width="17" height="3.400" fill="#3f88aa"/>
  <g fill="#3f88aa"><rect x="1897.500" y="338" width="3" height="2.200"/><rect x="1897.500" y="341.500" width="3" height="2.200"/><rect x="1897.500" y="345" width="3" height="2.200"/></g>
  <path d="M1902 339.100h9M1902 342.600h9M1902 346.100h9" stroke="#444" stroke-width="1.100"/>
  <!-- forum / 3dexperience -->
  <rect x="1895" y="362.500" width="13" height="10" fill="#ecebed" stroke="#555" stroke-width="1.100"/>
  <path d="M1897 365h9M1897 367.500h9M1897 370h5M1899 374.500h6" stroke="#666" stroke-width="0.800"/>
  <path d="M1902 371l4.500 -3l4.500 1.500v3.500l2.500 1v3l-4 1.500l-7.500 -3z" fill="#e8c53a" stroke="#8a6a00" stroke-width="0.700"/>
  <path d="M1907.500 365.500l4.500 -1.500l1.500 3.500l-2.500 3.500l-3.500 -1z" fill="#3f8fd0" stroke="#2a5f90" stroke-width="0.600"/>
</svg>
</div>
</body>
</html>
